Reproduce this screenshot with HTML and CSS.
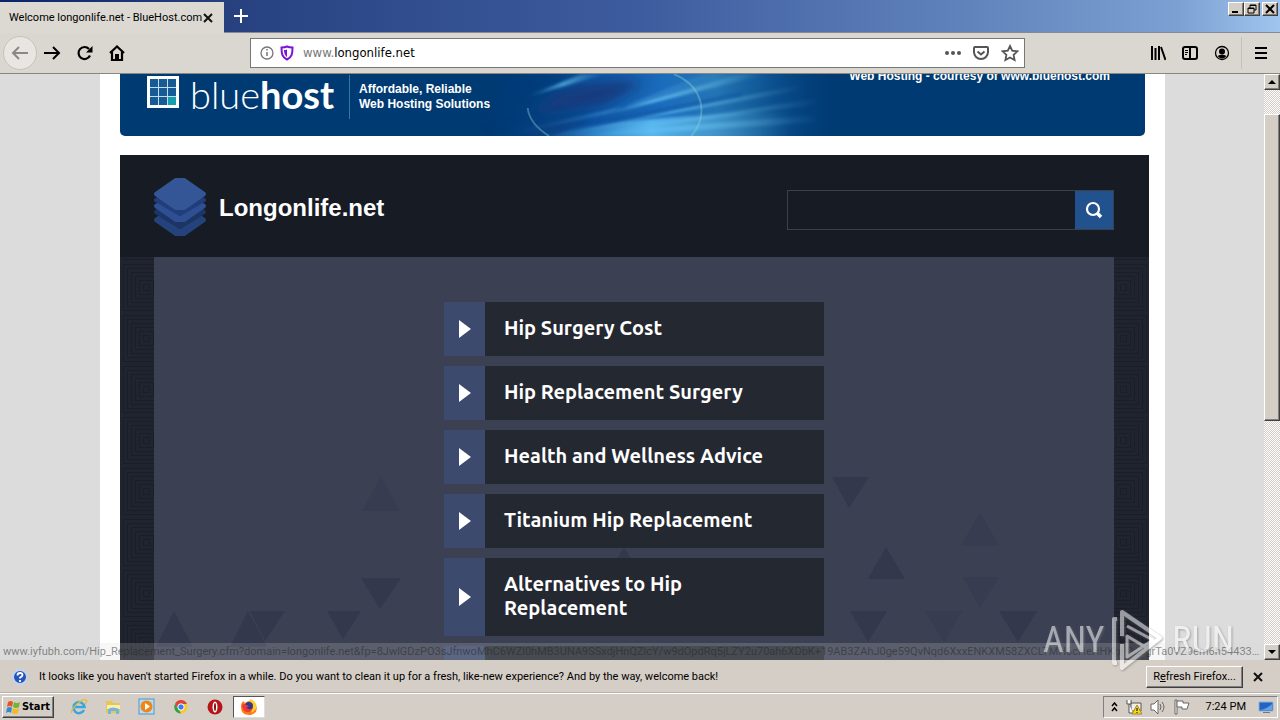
FILE: index.html
```html
<!DOCTYPE html>
<html lang="en">
<head>
<meta charset="utf-8">
<title>Welcome longonlife.net - BlueHost.com</title>
<link rel="stylesheet" href="styles.css">
</head>
<body>
<header class="tabbar">
  <div class="tab"><span>Welcome longonlife.net - BlueHost.com</span>
    <button class="plain" aria-label="Close tab"><svg width="12" height="12" viewBox="0 0 12 12"><path d="M2 2l8 8M10 2l-8 8" stroke="#111" stroke-width="2"/></svg></button>
  </div>
  <button class="plain newtab" aria-label="New tab"><svg width="14" height="14" viewBox="0 0 14 14"><path d="M7 0v14M0 7h14" stroke="#fff" stroke-width="2"/></svg></button>
  <div class="window-buttons">
    <button class="raised winbtn" aria-label="Minimize"><svg width="10" height="10" viewBox="0 0 10 10"><path d="M1 8h6" stroke="#000" stroke-width="2"/></svg></button>
    <button class="raised winbtn" aria-label="Restore"><svg width="10" height="10" viewBox="0 0 10 10"><path d="M3 4V1h6v5H7M3 1.500h6M1 4h6v5H1zM1 4.500h6" fill="none" stroke="#000"/></svg></button>
    <button class="raised winbtn last" aria-label="Close"><svg width="10" height="10" viewBox="0 0 10 10"><path d="M1 1l8 8M9 1L1 9" stroke="#000" stroke-width="2"/></svg></button>
  </div>
</header>
<nav class="toolbar">
  <div class="nav-buttons">
    <button class="plain back" aria-label="Back"><svg width="18" height="16" viewBox="0 0 18 16"><path d="M17 8H2M8 2L2 8l6 6" fill="none" stroke="#888" stroke-width="2"/></svg></button>
    <button class="plain" aria-label="Forward"><svg width="18" height="16" viewBox="0 0 18 16"><path d="M1 8h15M10 2l6 6-6 6" fill="none" stroke="#000" stroke-width="2"/></svg></button>
    <button class="plain" aria-label="Reload"><svg width="16" height="16" viewBox="0 0 16 16"><path d="M13 10.500A6 6 0 1 1 12 4" fill="none" stroke="#000" stroke-width="2.200"/><path d="M15.500 1v6.500H9z"/></svg></button>
    <button class="plain" aria-label="Home"><svg width="16" height="16" viewBox="0 0 16 16"><path d="M1 8l7-6.500L15 8M3 7v8h10V7" fill="none" stroke="#000" stroke-width="2.200"/><path d="M6 15V9h4v6z"/></svg></button>
  </div>
  <div class="address">
    <svg width="14" height="14" viewBox="0 0 14 14"><circle cx="7" cy="7" r="6" fill="none" stroke="#777" stroke-width="1.300"/><path d="M7 6v4M7 3v1.500" stroke="#777" stroke-width="1.500"/></svg>
    <svg width="14" height="16" viewBox="0 0 14 16"><path d="M7 1.500c2 1 3.500 1 5.500 1 0 6-.5 9.500-5.500 12C2 12 1.500 8.500 1.500 2.500c2 0 3.500 0 5.500-1z" fill="#fff" stroke="#7a13d6" stroke-width="2"/><path d="M7 4.500c-1 .5-2 .5-3 .5.200 4 1 5.500 3 7z" fill="#7a13d6"/></svg>
    <label class="url"><span>www.</span><input type="text" value="longonlife.net" aria-label="Address"></label>
    <div class="address-actions">
      <button class="plain" aria-label="Page actions"><svg width="16" height="16" viewBox="0 0 16 16" fill="#555"><circle cx="2" cy="8" r="2"/><circle cx="8" cy="8" r="2"/><circle cx="14" cy="8" r="2"/></svg></button>
      <button class="plain" aria-label="Save to Pocket"><svg width="16" height="16" viewBox="0 0 16 16" fill="none" stroke="#555" stroke-width="2"><path d="M2 2h12q1 0 1 1v4a7 7 0 0 1-14 0V3q0-1 1-1z"/><path d="M4.500 6.500L8 9.500l3.500-3"/></svg></button>
      <button class="plain" aria-label="Bookmark"><svg width="18" height="18" viewBox="0 0 18 18"><path d="M9 2l2.200 4.600 5.200.7-3.800 3.500 1 5.200L9 13.500 4.400 16l1-5.200-3.800-3.500 5.200-.7z" fill="none" stroke="#555" stroke-width="1.800"/></svg></button>
    </div>
  </div>
  <div class="tools">
    <button class="plain" aria-label="Library"><svg width="16" height="16" viewBox="0 0 16 16"><path d="M2 1v14M5.500 3v12M9 1v14M11 2l4.500 13" stroke="#000" stroke-width="2"/></svg></button>
    <button class="plain" aria-label="Sidebars"><svg width="16" height="16" viewBox="0 0 16 16" fill="none" stroke="#000"><rect x="1" y="2" width="14" height="12" rx="2" stroke-width="2"/><path d="M8 2v12" stroke-width="2"/><path d="M3 5.500h3M3 7.500h3M3 9.500h2"/></svg></button>
    <button class="plain" aria-label="Account"><svg width="16" height="16" viewBox="0 0 16 16"><circle cx="8" cy="8" r="6.500" fill="none" stroke="#000" stroke-width="1.300"/><circle cx="8" cy="6.500" r="3"/><path d="M3.500 11q4.500-2.500 9 0-4.500 5-9 0z"/></svg></button>
    <span class="divider"></span>
    <button class="plain" aria-label="Menu"><svg width="14" height="14" viewBox="0 0 14 14"><path d="M1 2h12M1 7h12M1 12h12" stroke="#000" stroke-width="2"/></svg></button>
  </div>
</nav>

<div class="viewport">
  <div class="canvas">
    <main class="sheet">
      <section class="banner">
        <svg class="rays" viewBox="0 0 400 62" preserveAspectRatio="none" aria-hidden="true">
          <defs>
            <linearGradient id="glow"><stop offset="0" stop-color="#003a73" stop-opacity="0"/><stop offset=".3" stop-color="#0d52a0"/><stop offset=".5" stop-color="#1b6cbd"/><stop offset=".64" stop-color="#2474b4"/><stop offset=".8" stop-color="#0b4f8d"/><stop offset="1" stop-color="#003a73" stop-opacity="0"/></linearGradient>
            <linearGradient id="ray"><stop offset="0" stop-color="#58c4ff" stop-opacity="0"/><stop offset=".45" stop-color="#67c8fa"/><stop offset="1" stop-color="#5fb0d0" stop-opacity="0"/></linearGradient>
            <filter id="soft"><feGaussianBlur stdDeviation="1.500"/></filter>
            <filter id="wide" x="-20%" y="-40%" width="140%" height="180%"><feGaussianBlur stdDeviation="6"/></filter>
          </defs>
          <rect width="380" height="62" fill="url(#glow)"/>
          <path d="M30 0h70L10 52z" fill="#063a78" opacity=".7" filter="url(#wide)"/>
          <path d="M60 34q30-30 110-26l-40 22-70 10z" fill="#123a7e" filter="url(#wide)"/>
          <path d="M10 62l110-26-30 26z" fill="#0a3f82" opacity=".6" filter="url(#wide)"/>
          <g fill="url(#ray)" filter="url(#soft)">
            <path d="M20 62L290 0h-60L130 40z" opacity=".35"/>
            <path d="M80 52L290 2l-2-3h-16L130 40z"/>
            <path d="M90 58L330 16v-5L130 50z" opacity=".8"/>
            <path d="M100 62L350 30v-6L120 59z" opacity=".6"/>
            <path d="M100 64L350 48v-7L150 56z" opacity=".6"/>
            <path d="M60 20L130 0h-24L50 22z" opacity=".7"/>
            <path d="M60 66q60-24 260-28v28z" opacity=".8"/>
          </g>
          <path d="M100 54L270 20" stroke="#0d4f9c" stroke-width="3" opacity=".6" filter="url(#soft)"/>
          <path d="M200 0c34 14 34 44 18 62M50 34q2 16 22 28" fill="none" stroke="#8fd0d8" stroke-width="2" opacity=".4"/>
        </svg>
        <div class="brand">
          <svg width="34" height="34" viewBox="0 0 34 34"><rect x="2.500" y="2.500" width="29" height="29" fill="#165a96" stroke="#fff" stroke-width="3"/><path d="M22 22h8v8h-8z" fill="#149fae"/><path d="M12.500 4v26M21.500 4v26M4 12.500h26M4 21.500h26" stroke="#c5dcec"/></svg>
          <span class="brand-name">blue<b>host</b></span>
        </div>
        <p class="tagline">Affordable, Reliable<br>Web Hosting Solutions</p>
        <p class="courtesy">Web Hosting - courtesy of www.bluehost.com</p>
      </section>

      <section class="parked">
        <header class="parked-head">
          <svg width="54" height="60" viewBox="0 0 54 60"><g stroke-linejoin="round" stroke-width="4"><path d="M27 26L3 43l20 14h8l20-14z" fill="#24427c" stroke="#24427c"/><path d="M27 20L3 35l24 15 24-15z" fill="#1d3464" stroke="#1d3464"/><path d="M27 14L3 29l20 14h8l20-14z" fill="#2e4f94" stroke="#2e4f94"/><path d="M27 10L3 23l24 14 24-14z" fill="#213d7a" stroke="#213d7a"/><path d="M23 3L3 17l20 14h8l20-14L31 3z" fill="#345596" stroke="#345596"/></g></svg>
          <h1>Longonlife.net</h1>
          <form class="search">
            <input type="text" aria-label="Search">
            <button type="button" aria-label="Search"><svg width="18" height="18" viewBox="0 0 18 18"><circle cx="8" cy="8" r="6" fill="none" stroke="#fff" stroke-width="2.200"/><path d="M12.500 12.500L16 16" stroke="#fff" stroke-width="3.500"/></svg></button>
          </form>
        </header>
        <div class="parked-body">
          <svg class="weave" aria-hidden="true"><defs><pattern id="maze-left" width="51" height="51" patternUnits="userSpaceOnUse" x="1" y="5"><g fill="none" stroke="#1a1e28"><rect x="2.500" y="2.500" width="46" height="46"/><rect x="6.500" y="6.500" width="38" height="38"/><rect x="10.500" y="10.500" width="30" height="30"/><rect x="14.500" y="14.500" width="22" height="22"/><rect x="18.500" y="18.500" width="14" height="14"/><rect x="22.500" y="22.500" width="6" height="6"/></g></pattern></defs><rect width="100%" height="100%" fill="url(#maze-left)"/></svg>
          <div class="results">
            <svg class="triangles" viewBox="154 257 960 404" preserveAspectRatio="xMidYMin slice" aria-hidden="true"><g fill="#33384d"><path d="M174 611l19 36h-37zM248 611l19 36h-37zM250 611h35l-20 30zM327 611h34l-18 28zM361 578h40l-21 31zM886 547l19 32h-37zM832 477h37l-20 31zM850 611h37l-19 31zM999 611h38l-19 31zM624 547l19 32h-38z"/><path opacity=".5" d="M381 477l19 34h-38zM980 513l19 33h-38zM963 577h36l-19 31zM925 611h37l-18 31z"/></g></svg>
            <ul class="links">
              <li><a href="#"><i></i><span>Hip Surgery Cost</span></a></li>
              <li><a href="#"><i></i><span>Hip Replacement Surgery</span></a></li>
              <li><a href="#"><i></i><span>Health and Wellness Advice</span></a></li>
              <li><a href="#"><i></i><span>Titanium Hip Replacement</span></a></li>
              <li><a href="#"><i></i><span>Alternatives to Hip Replacement</span></a></li>
              <li><a href="#" aria-label="More"><i></i><span></span></a></li>
            </ul>
          </div>
          <svg class="weave" aria-hidden="true"><defs><pattern id="maze-right" width="51" height="51" patternUnits="userSpaceOnUse" x="-16" y="5"><g fill="none" stroke="#1a1e28"><rect x="2.500" y="2.500" width="46" height="46"/><rect x="6.500" y="6.500" width="38" height="38"/><rect x="10.500" y="10.500" width="30" height="30"/><rect x="14.500" y="14.500" width="22" height="22"/><rect x="18.500" y="18.500" width="14" height="14"/><rect x="22.500" y="22.500" width="6" height="6"/></g></pattern></defs><rect width="100%" height="100%" fill="url(#maze-right)"/></svg>
        </div>
      </section>
    </main>
  </div>
  <div class="scrollbar">
    <button class="raised scroll-btn" aria-label="Scroll up"><svg width="8" height="4" viewBox="0 0 8 4"><path d="M4 0l4 4H0z"/></svg></button>
    <div class="track"><div class="raised thumb"></div></div>
    <button class="raised scroll-btn" aria-label="Scroll down"><svg width="8" height="4" viewBox="0 0 8 4"><path d="M0 0h8L4 4z"/></svg></button>
  </div>
  <div class="status">www.iyfubh.com/Hip_Replacement_Surgery.cfm?domain=longonlife.net&amp;fp=8JwlGDzPO3sJfnwoMhC6WZl0hMB3UNA9SSxdjHnQZlcY/w9dOpdRq5jLZY2u70ah6XDbK+19AB3ZAhJ0ge59QvNqd6XxxENKXM58ZXCLTMH6cHeHHKbrl0cZgrTa0VZ9em6h54433/cmUx...</div>
</div>

<aside class="notice">
  <svg width="16" height="16" viewBox="0 0 16 16"><circle cx="8" cy="8" r="7" fill="#2455b8" stroke="#c4d2eb" stroke-width="2"/><path d="M5.500 6.500Q5.500 4 8 4t2.500 2Q10.500 7.500 8 8.500v1M8 11v2" fill="none" stroke="#fff" stroke-width="1.800"/></svg>
  <span class="notice-text">It looks like you haven't started Firefox in a while. Do you want to clean it up for a fresh, like-new experience? And by the way, welcome back!</span>
  <button class="raised refresh">R<u>e</u>fresh Firefox...</button>
  <button class="plain" aria-label="Dismiss"><svg width="12" height="12" viewBox="0 0 12 12"><path d="M2 2l8 8M10 2l-8 8" stroke="#111" stroke-width="2"/></svg></button>
</aside>

<footer class="taskbar">
  <button class="raised start"><svg width="16" height="16" viewBox="0 0 16 16"><path d="M2 3q3-2 5 0L6 8Q4 6 1 8z" fill="#e2571e"/><path d="M8 3q3 2 6 0l-1 5q-3 2-6 0z" fill="#72b43a"/><path d="M1 9q3-2 5 0l-1 5q-2-2-5 0z" fill="#338ad2"/><path d="M7 9q3 2 6 0l-1 5q-3 2-6 0z" fill="#f5b921"/></svg>Start</button>
  <div class="apps">
    <button class="plain app" aria-label="Internet Explorer"><svg width="18" height="18" viewBox="0 0 18 18"><path d="M14 12a5.500 5.500 0 1 1 .5-3H5" fill="none" stroke="#37a7e0" stroke-width="2.500"/><path d="M2 15C-1 12 12 0 16 2q2 1-1 4" fill="none" stroke="#e4ba3c" stroke-width="1.300"/></svg></button>
    <button class="plain app" aria-label="Explorer"><svg width="18" height="18" viewBox="0 0 18 18"><path d="M2 3h6l1 2h7v10H2z" fill="#e7c557"/><path d="M3 7h13v4H3z" fill="#fbefae"/><path d="M4 16v-5q5-3 11 0v5h-3v-3H7v3z" fill="#73b6dc"/></svg></button>
    <button class="plain app" aria-label="Media Player"><svg width="18" height="18" viewBox="0 0 18 18"><rect x="1" y="1" width="15" height="15" fill="#b7dbf3" stroke="#4f96cf"/><circle cx="8.500" cy="8.500" r="6" fill="#ee8613"/><path d="M7 5l5 3.500L7 12z" fill="#fff"/></svg></button>
    <button class="plain app" aria-label="Chrome"><svg width="18" height="18" viewBox="0 0 18 18"><circle cx="9" cy="9" r="6.500" fill="#fbc927"/><path d="M3 6a6.500 6.500 0 0 1 12 0H9l-3 5z" fill="#de4334"/><path d="M3 6l4 6 2 3.500A6.500 6.500 0 0 1 3 6z" fill="#2ba24c"/><circle cx="9" cy="9" r="3.200" fill="#3b7ded" stroke="#fff"/></svg></button>
    <button class="plain app" aria-label="Opera"><svg width="18" height="18" viewBox="0 0 18 18"><circle cx="9" cy="9" r="7.500" fill="#b71418"/><ellipse cx="9" cy="9" rx="2.500" ry="5.500" fill="#fff"/><ellipse cx="9" cy="9" rx="1" ry="4" fill="#8b090d"/></svg></button>
    <button class="plain app active" aria-label="Firefox"><svg width="18" height="18" viewBox="0 0 18 18"><path d="M3 3l2 2q6-5 10 0 5 9-4 12Q1 18 1 9q0-4 2-6z" fill="#ff7b18"/><path d="M10 1q8 3 6 10l-4 4-2-7z" fill="#ffce2f"/><circle cx="9" cy="8" r="4" fill="#31398d"/><path d="M2 7q2-2 4 0l3 1q-2 2-3 1 3 4 7 1-2 5-7 4-4-2-4-7z" fill="#f13a38"/></svg></button>
  </div>
  <div class="tray">
    <svg width="7" height="10" viewBox="0 0 7 10" fill="none" stroke="#000" stroke-width="1.500"><path d="M1 4l2.500-3L6 4M1 9l2.500-3L6 9"/></svg>
    <svg width="16" height="16" viewBox="0 0 16 16"><path d="M5 4h10v8H5z" fill="#eee" stroke="#555"/><path d="M1 1v4h4V1M3 5v9h4" fill="#fff" stroke="#555"/><path d="M11 6l5 9H6z" fill="#f8d51e" stroke="#a38a18"/><path d="M11 9v3M11 13v1" stroke="#000"/></svg>
    <svg width="16" height="16" viewBox="0 0 16 16" fill="none" stroke="#666"><path d="M1 5h3l4-4v14l-4-4H1z" fill="#fff"/><path d="M10 5q2 3 0 6M12 3q4 5 0 10"/></svg>
    <svg width="16" height="16" viewBox="0 0 16 16" fill="#fff" stroke="#666"><path d="M1 1h2v14H1z"/><path d="M3 2h6v2h6l-2 6H8V8H3z"/></svg>
    <time>7:24 PM</time>
    <svg width="16" height="16" viewBox="0 0 16 16"><path d="M1 3h14v9H1z" fill="#2364c2" stroke="#8eb0dc"/><path d="M2 11Q9 10 14 5v6z" fill="#66a1e4"/><path d="M5 13h7v1H5z" fill="#777"/></svg>
  </div>
</footer>

<div class="watermark" aria-hidden="true"><span>ANY</span><svg width="56" height="64" viewBox="0 0 56 64" fill="none" stroke="#fff" stroke-width="4" stroke-linejoin="round"><path d="M7 11H4v44h3"/><path d="M12 28V4l38 26-38 30V36"/><path d="M17 18l26 14-26 17V28l20 12" stroke-width="3"/></svg><span>RUN</span></div>
</body>
</html>
```
FILE: styles.css
```css
* { box-sizing: border-box; }
body {
  margin: 0;
  height: 100vh;
  display: flex;
  flex-direction: column;
  overflow: hidden;
  background: #d5cec6;
  color: #000;
  font: 11px/16px Roboto, "DejaVu Sans Condensed", sans-serif;
}
svg { display: block; flex: none; }
button, input { font: inherit; color: inherit; border-radius: 0; }
.plain { border: 0; padding: 0; background: none; display: flex; align-items: center; justify-content: center; }
.raised {
  background: #d5cec6;
  border: 1px solid;
  border-color: #fff #404040 #404040 #fff;
  box-shadow: inset -1px -1px #808080;
  padding: 0;
  display: flex;
  align-items: center;
  justify-content: center;
}

/* Tabs */
.tabbar {
  flex: none;
  height: 33px;
  display: flex;
  align-items: center;
  background: linear-gradient(90deg, #0a246a 0, #27417f 224px, #3d5c9f 50%, #6082bb 75%, #7ca0d2 92%, #a0c5ee);
  border-bottom: 1px solid #858a96;
}
.tab {
  width: 224px;
  height: 31px;
  margin-top: 2px;
  align-self: flex-start;
  padding: 0 11px 0 9px;
  display: flex;
  align-items: center;
  justify-content: space-between;
  background: #dcd8d2;
  white-space: nowrap;
}
.newtab { margin-left: 10px; }
.window-buttons { margin-left: auto; align-self: flex-start; padding: 2px 2px 0 0; display: flex; }
.winbtn { width: 16px; height: 14px; }
.last { margin-left: 2px; }

/* Navigation */
.toolbar {
  flex: none;
  height: 41px;
  display: flex;
  align-items: center;
  background: #dad6d0;
  border-bottom: 1px solid #8a8680;
}
.nav-buttons { width: 250px; padding-left: 3px; display: flex; align-items: center; gap: 16px; }
.nav-buttons .back { width: 34px; height: 34px; margin-right: -10px; border: 1px solid #c6c2bb; border-radius: 50%; background: #e9e6e2; }
.address {
  flex: 1;
  height: 30px;
  display: flex;
  align-items: center;
  gap: 6px;
  padding: 0 5px 0 9px;
  border: 1px solid #777;
  background: #fff;
}
.url { flex: 1; display: flex; align-items: center; margin-left: 3px; font: 13px/16px "DejaVu Sans Condensed", sans-serif; }
.url span { color: #777; }
.url input { flex: 1; min-width: 0; border: 0; padding: 0; background: none; outline: 0; }
.address-actions { display: flex; align-items: center; gap: 12px; }
.tools { width: 255px; padding-right: 12px; display: flex; align-items: center; justify-content: flex-end; gap: 16px; }
.divider { width: 1px; height: 32px; margin: 0 -4px 0 -5px; background: #c4c0ba; }

/* Page */
.viewport { flex: 1; min-height: 0; display: flex; position: relative; overflow: hidden; }
.canvas { flex: 1; min-width: 0; padding: 0 99px 0 100px; background: #dcdcdc; overflow: hidden; }
.sheet { min-height: 100%; margin-top: -20px; padding: 0 16px 0 20px; background: #fff; }
.banner {
  position: relative;
  height: 82px;
  margin-right: 4px;
  padding: 21px 0 0 26px;
  display: flex;
  border-radius: 0 0 5px 5px;
  background: #003a73;
  color: #fff;
  font: bold 12px/15px "Liberation Sans", Arial, sans-serif;
  overflow: hidden;
}
.banner p { margin: 0; }
.rays { position: absolute; left: 35%; bottom: 0; width: 38%; height: 62px; }
.brand { position: relative; display: flex; gap: 10px; width: 204px; height: 44px; border-right: 1px solid #3f73a0; }
.brand-name { font: 300 38px/38px Lato, sans-serif; }
.brand-name b { font-weight: 700; }
.tagline { position: relative; padding: 7px 0 0 9px; }
.banner .courtesy { position: relative; margin: -6px 35px 0 auto; }

.parked { margin-top: 19px; background: #20242e; }
.parked-head { height: 102px; padding: 2px 35px 0 33px; display: flex; align-items: center; background: #171c24; }
.parked-head h1 { margin: 2px 0 0 12px; color: #fff; font: bold 24px/30px "Liberation Sans", Arial, sans-serif; }
.search { width: 327px; height: 40px; margin: 6px 0 0 auto; display: flex; border: 1px solid #3a404e; }
.search input { flex: 1; min-width: 0; border: 0; background: none; color: #fff; }
.search button { width: 38px; border: 0; padding: 0; background: #22528d; display: flex; align-items: center; justify-content: center; }
.parked-body { display: flex; height: 460px; }
.weave { width: 34px; height: 460px; }
.weave:last-child { width: 35px; }
.results { flex: 1; position: relative; padding-top: 45px; background: #3b4053; }
.triangles { position: absolute; top: 0; left: 0; width: 100%; height: 404px; }
.links { position: relative; list-style: none; width: 380px; margin: 0 auto; padding: 0; display: grid; gap: 10px; }
.links a { display: flex; min-height: 54px; color: #fff; text-decoration: none; background: #242831; font: bold 20px/24px Ubuntu, "Noto Sans", sans-serif; }
.links i { width: 41px; display: flex; align-items: center; padding: 0 0 0 15px; background: #3c4a6d; }
.links i::before { content: ""; border: 9px solid transparent; border-left: 12px solid #fff; border-right: 0; }
.links span { flex: 1; padding: 14px 20px 16px 19px; }

.scrollbar { width: 16px; display: flex; flex-direction: column; background: #e9e6e2; }
.scroll-btn { width: 16px; height: 16px; flex: none; }
.track { flex: 1; padding-top: 24px; background: repeating-conic-gradient(#d5cec6 0 25%, #fff 0 50%) 0 0 / 2px 2px; }
.thumb { height: 58%; }
.status {
  position: absolute;
  left: 0;
  bottom: 0;
  width: calc(100% - 16px);
  height: 17px;
  padding: 1px 4px 0 3px;
  overflow: hidden;
  text-overflow: ellipsis;
  white-space: nowrap;
  background: rgba(213, 213, 213, .2);
  color: rgba(35, 35, 35, .5);
}

/* Notice and taskbar */
.notice { flex: none; height: 33px; padding: 1px 16px 0 12px; display: flex; align-items: center; border-bottom: 1px solid #b7b1aa; }
.notice-text { flex: 1; padding-left: 11px; white-space: nowrap; }
.refresh { width: 97px; height: 22px; margin-right: 9px; white-space: nowrap; }
.taskbar { flex: none; height: 27px; padding: 1px 2px; display: flex; align-items: center; border-top: 1px solid #fff; }
.start { width: 52px; height: 22px; font: bold 11px/16px "DejaVu Sans Condensed", sans-serif; }
.apps { margin-left: 9px; display: flex; gap: 2px; }
.app { width: 32px; height: 22px; }
.active { background: #fff; border: 1px solid; border-color: #555 #ddd #ddd #555; }
.tray { height: 22px; margin-left: auto; padding: 0 3px 0 7px; display: flex; align-items: center; gap: 8px; border: 1px solid; border-color: #808080 #fff #fff #808080; }
.tray time { padding: 0 4px 0 8px; }

.watermark {
  position: absolute;
  right: 46px;
  bottom: 48px;
  display: flex;
  align-items: center;
  gap: 6px;
  color: #fff;
  opacity: .55;
  font: 36px/64px "Liberation Sans Narrow", "Roboto Condensed", "Liberation Sans", sans-serif;
  filter: drop-shadow(1px 1px 1px #777);
}
```
